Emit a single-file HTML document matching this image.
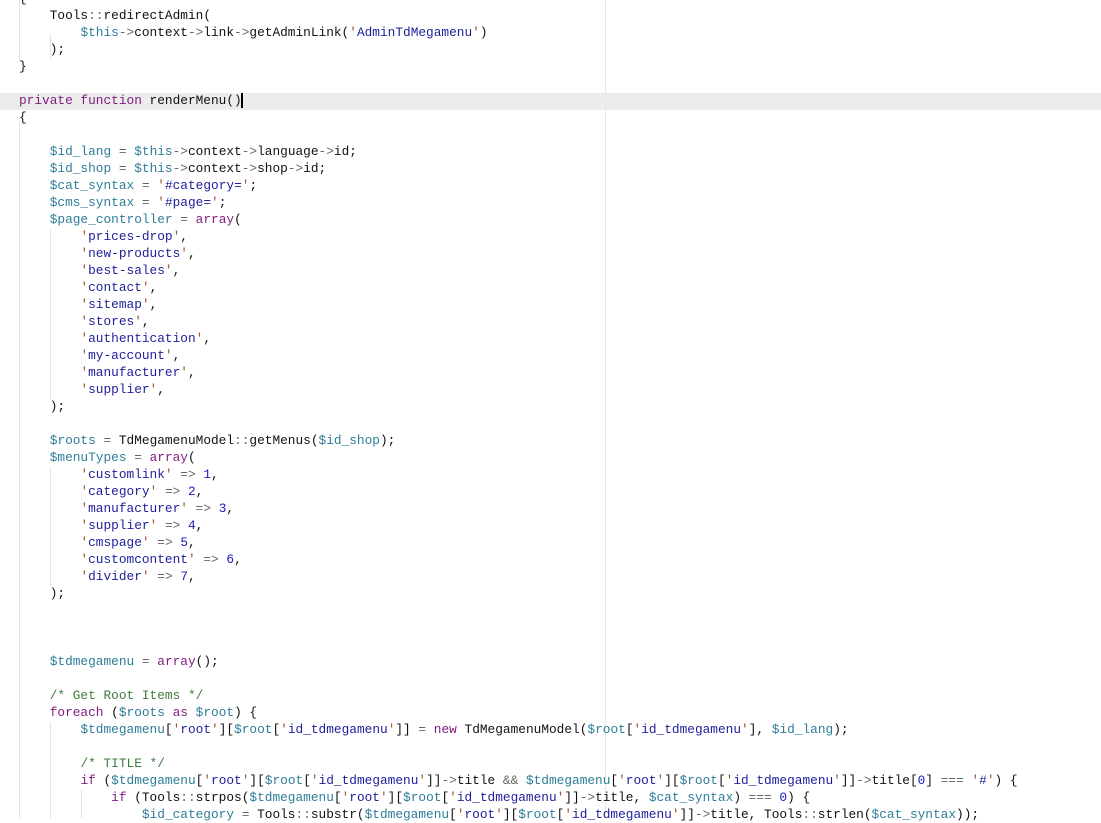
<!DOCTYPE html>
<html><head><meta charset="utf-8"><style>
body{margin:0;width:1101px;height:818px;overflow:hidden;background:#fff;position:relative;font-family:"Liberation Mono",monospace;font-size:12.8px;color:#111}
.l{position:absolute;left:19px;height:17px;line-height:17px;white-space:pre}
.v{color:#2e7d99}.k{color:#7f1b7f}.s{color:#1e1e9a}.q{color:#a0522d}.o{color:#666}.c{color:#3e7d3e}.n{color:#1a1ab8}
.hl{position:absolute;left:0;top:93px;width:1101px;height:17px;background:#ececec}
.g{position:absolute;width:1px;background:#e4e4e4}
</style></head><body>
<div class="hl"></div>
<div class="g" style="left:605px;top:0;height:818px;background:#e8e8e8"></div>
<div class="g" style="left:19px;top:0;height:60px"></div>
<div class="g" style="left:50px;top:34px;height:25px"></div>
<div class="g" style="left:19px;top:118px;height:700px"></div>
<div class="g" style="left:50px;top:230px;height:170px"></div>
<div class="g" style="left:50px;top:468px;height:118px"></div>
<div class="g" style="left:50px;top:722px;height:96px"></div>
<div class="g" style="left:81px;top:790px;height:28px"></div>
<div class="l" style="top:-10px">{</div>
<div class="l" style="top:7px">    Tools<span class="o">::</span>redirectAdmin(</div>
<div class="l" style="top:24px">        <span class="v">$this</span><span class="o">-&gt;</span>context<span class="o">-&gt;</span>link<span class="o">-&gt;</span>getAdminLink(<span class="q">'</span><span class="s">AdminTdMegamenu</span><span class="q">'</span>)</div>
<div class="l" style="top:41px">    );</div>
<div class="l" style="top:58px">}</div>
<div class="l" style="top:92px"><span class="k">private function</span> renderMenu()<span style="border-left:2px solid #000;margin-left:-1px"></span></div>
<div class="l" style="top:109px">{</div>
<div class="l" style="top:143px">    <span class="v">$id_lang</span> <span class="o">=</span> <span class="v">$this</span><span class="o">-&gt;</span>context<span class="o">-&gt;</span>language<span class="o">-&gt;</span>id;</div>
<div class="l" style="top:160px">    <span class="v">$id_shop</span> <span class="o">=</span> <span class="v">$this</span><span class="o">-&gt;</span>context<span class="o">-&gt;</span>shop<span class="o">-&gt;</span>id;</div>
<div class="l" style="top:177px">    <span class="v">$cat_syntax</span> <span class="o">=</span> <span class="q">'</span><span class="s">#category=</span><span class="q">'</span>;</div>
<div class="l" style="top:194px">    <span class="v">$cms_syntax</span> <span class="o">=</span> <span class="q">'</span><span class="s">#page=</span><span class="q">'</span>;</div>
<div class="l" style="top:211px">    <span class="v">$page_controller</span> <span class="o">=</span> <span class="k">array</span>(</div>
<div class="l" style="top:228px">        <span class="q">'</span><span class="s">prices-drop</span><span class="q">'</span>,</div>
<div class="l" style="top:245px">        <span class="q">'</span><span class="s">new-products</span><span class="q">'</span>,</div>
<div class="l" style="top:262px">        <span class="q">'</span><span class="s">best-sales</span><span class="q">'</span>,</div>
<div class="l" style="top:279px">        <span class="q">'</span><span class="s">contact</span><span class="q">'</span>,</div>
<div class="l" style="top:296px">        <span class="q">'</span><span class="s">sitemap</span><span class="q">'</span>,</div>
<div class="l" style="top:313px">        <span class="q">'</span><span class="s">stores</span><span class="q">'</span>,</div>
<div class="l" style="top:330px">        <span class="q">'</span><span class="s">authentication</span><span class="q">'</span>,</div>
<div class="l" style="top:347px">        <span class="q">'</span><span class="s">my-account</span><span class="q">'</span>,</div>
<div class="l" style="top:364px">        <span class="q">'</span><span class="s">manufacturer</span><span class="q">'</span>,</div>
<div class="l" style="top:381px">        <span class="q">'</span><span class="s">supplier</span><span class="q">'</span>,</div>
<div class="l" style="top:398px">    );</div>
<div class="l" style="top:432px">    <span class="v">$roots</span> <span class="o">=</span> TdMegamenuModel<span class="o">::</span>getMenus(<span class="v">$id_shop</span>);</div>
<div class="l" style="top:449px">    <span class="v">$menuTypes</span> <span class="o">=</span> <span class="k">array</span>(</div>
<div class="l" style="top:466px">        <span class="q">'</span><span class="s">customlink</span><span class="q">'</span> <span class="o">=&gt;</span> <span class="n">1</span>,</div>
<div class="l" style="top:483px">        <span class="q">'</span><span class="s">category</span><span class="q">'</span> <span class="o">=&gt;</span> <span class="n">2</span>,</div>
<div class="l" style="top:500px">        <span class="q">'</span><span class="s">manufacturer</span><span class="q">'</span> <span class="o">=&gt;</span> <span class="n">3</span>,</div>
<div class="l" style="top:517px">        <span class="q">'</span><span class="s">supplier</span><span class="q">'</span> <span class="o">=&gt;</span> <span class="n">4</span>,</div>
<div class="l" style="top:534px">        <span class="q">'</span><span class="s">cmspage</span><span class="q">'</span> <span class="o">=&gt;</span> <span class="n">5</span>,</div>
<div class="l" style="top:551px">        <span class="q">'</span><span class="s">customcontent</span><span class="q">'</span> <span class="o">=&gt;</span> <span class="n">6</span>,</div>
<div class="l" style="top:568px">        <span class="q">'</span><span class="s">divider</span><span class="q">'</span> <span class="o">=&gt;</span> <span class="n">7</span>,</div>
<div class="l" style="top:585px">    );</div>
<div class="l" style="top:653px">    <span class="v">$tdmegamenu</span> <span class="o">=</span> <span class="k">array</span>();</div>
<div class="l" style="top:687px">    <span class="c">/* Get Root Items */</span></div>
<div class="l" style="top:704px">    <span class="k">foreach</span> (<span class="v">$roots</span> <span class="k">as</span> <span class="v">$root</span>) {</div>
<div class="l" style="top:721px">        <span class="v">$tdmegamenu</span>[<span class="q">'</span><span class="s">root</span><span class="q">'</span>][<span class="v">$root</span>[<span class="q">'</span><span class="s">id_tdmegamenu</span><span class="q">'</span>]] <span class="o">=</span> <span class="k">new</span> TdMegamenuModel(<span class="v">$root</span>[<span class="q">'</span><span class="s">id_tdmegamenu</span><span class="q">'</span>], <span class="v">$id_lang</span>);</div>
<div class="l" style="top:755px">        <span class="c">/* TITLE */</span></div>
<div class="l" style="top:772px">        <span class="k">if</span> (<span class="v">$tdmegamenu</span>[<span class="q">'</span><span class="s">root</span><span class="q">'</span>][<span class="v">$root</span>[<span class="q">'</span><span class="s">id_tdmegamenu</span><span class="q">'</span>]]<span class="o">-&gt;</span>title <span class="o">&amp;&amp;</span> <span class="v">$tdmegamenu</span>[<span class="q">'</span><span class="s">root</span><span class="q">'</span>][<span class="v">$root</span>[<span class="q">'</span><span class="s">id_tdmegamenu</span><span class="q">'</span>]]<span class="o">-&gt;</span>title[<span class="n">0</span>] <span class="o">===</span> <span class="q">'</span><span class="s">#</span><span class="q">'</span>) {</div>
<div class="l" style="top:789px">            <span class="k">if</span> (Tools<span class="o">::</span>strpos(<span class="v">$tdmegamenu</span>[<span class="q">'</span><span class="s">root</span><span class="q">'</span>][<span class="v">$root</span>[<span class="q">'</span><span class="s">id_tdmegamenu</span><span class="q">'</span>]]<span class="o">-&gt;</span>title, <span class="v">$cat_syntax</span>) <span class="o">===</span> <span class="n">0</span>) {</div>
<div class="l" style="top:806px">                <span class="v">$id_category</span> <span class="o">=</span> Tools<span class="o">::</span>substr(<span class="v">$tdmegamenu</span>[<span class="q">'</span><span class="s">root</span><span class="q">'</span>][<span class="v">$root</span>[<span class="q">'</span><span class="s">id_tdmegamenu</span><span class="q">'</span>]]<span class="o">-&gt;</span>title, Tools<span class="o">::</span>strlen(<span class="v">$cat_syntax</span>));</div>
</body></html>
